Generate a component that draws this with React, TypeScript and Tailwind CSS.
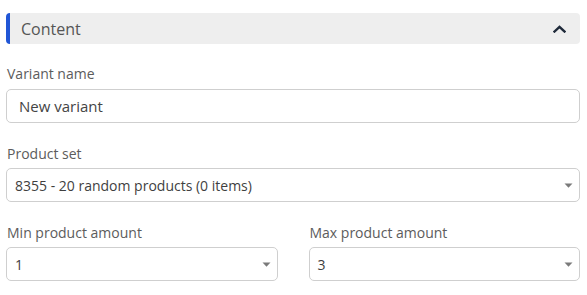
import { ReactNode } from "react";

function ChevronUp() {
  return (
    <svg width="13" height="8" viewBox="0 0 13 8" fill="none" aria-hidden="true">
      <path d="M1.5 6.5L6.5 1.8L11.5 6.5" stroke="#1f2a3a" strokeWidth="2.4" strokeLinecap="square" />
    </svg>
  );
}

function Caret() {
  return (
    <svg width="9" height="5" viewBox="0 0 9 5" aria-hidden="true">
      <path d="M0.5 0.5H8.5L4.5 4.8Z" fill="#7a7a7a" />
    </svg>
  );
}

function Field({ label, children, className = "" }: { label: string; children: ReactNode; className?: string }) {
  return (
    <div className={className}>
      <div className="text-[14px] leading-[20px] text-[#5c5c5c] pl-px">{label}</div>
      {children}
    </div>
  );
}

function SelectBox({ value }: { value: string }) {
  return (
    <div className="mt-[4px] h-[34px] flex items-center justify-between rounded-[5px] border border-[#cfcfcf] bg-white pl-[8px] pr-[6px]">
      <span className="text-[14px] text-[#3f3f3f]">{value}</span>
      <Caret />
    </div>
  );
}

export default function App() {
  return (
    <div className="w-[587px] h-[295px] bg-white pl-[6px] pr-[7px] pt-[13px] font-['Open_Sans',sans-serif]">
      {/* Section header */}
      <div className="h-[31px] flex items-center justify-between rounded-[4px] bg-[#eeeeee] border-l-4 border-[#2156d6] pl-[11px] pr-[14px]">
        <span className="text-[16px] text-[#555555]">Content</span>
        <ChevronUp />
      </div>

      <Field label="Variant name" className="mt-[20px]">
        <div className="mt-[5px] h-[34px] flex items-center rounded-[5px] border border-[#cfcfcf] bg-white pl-[12px]">
          <span className="text-[15px] text-[#444444]">New variant</span>
        </div>
      </Field>

      <Field label="Product set" className="mt-[21px]">
        <SelectBox value="8355 - 20 random products (0 items)" />
      </Field>

      <div className="mt-[21px] grid grid-cols-2 gap-[31px]">
        <Field label="Min product amount">
          <SelectBox value="1" />
        </Field>
        <Field label="Max product amount">
          <SelectBox value="3" />
        </Field>
      </div>
    </div>
  );
}
